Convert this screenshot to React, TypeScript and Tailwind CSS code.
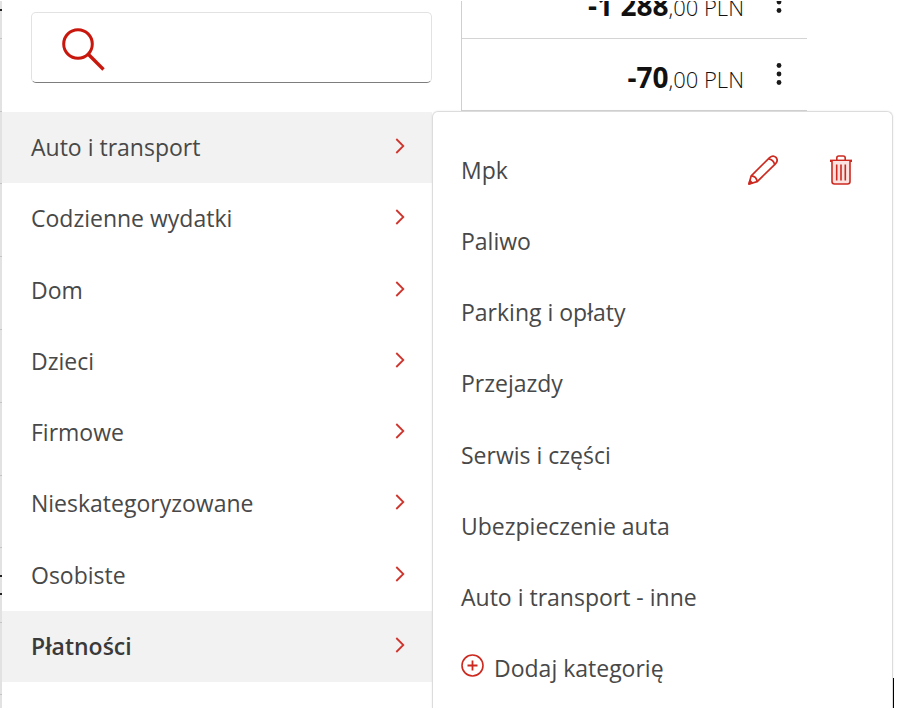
import { useState } from 'react';
import clsx from 'clsx';

interface Transaction {
  id: number;
  whole: string;
  cents: string;
}

const transactions: Transaction[] = [
  { id: 1, whole: '-1 288', cents: ',00 PLN' },
  { id: 2, whole: '-70', cents: ',00 PLN' },
];

const categories = [
  'Auto i transport',
  'Codzienne wydatki',
  'Dom',
  'Dzieci',
  'Firmowe',
  'Nieskategoryzowane',
  'Osobiste',
  'Płatności',
];

const subcategories = [
  { name: 'Mpk', editable: true },
  { name: 'Paliwo' },
  { name: 'Parking i opłaty' },
  { name: 'Przejazdy' },
  { name: 'Serwis i części' },
  { name: 'Ubezpieczenie auta' },
  { name: 'Auto i transport - inne' },
];

const currentCategory = 'Płatności';

function SearchIcon() {
  return (
    <svg className="h-11 w-11 shrink-0" viewBox="0 0 44 44" fill="none" stroke="#c8170d" aria-hidden="true">
      <circle cx="17" cy="17" r="14.3" strokeWidth="3" />
      <path d="M27.3 27.3 42.5 42.5" strokeWidth="3.4" />
    </svg>
  );
}

function ChevronIcon() {
  return (
    <svg className="h-4 w-[10px] shrink-0" viewBox="0 0 10 16" fill="none" stroke="#d0342c" strokeWidth="1.8" aria-hidden="true">
      <path d="M1.3 1 8.3 8 1.3 15" />
    </svg>
  );
}

function PencilIcon() {
  return (
    <svg
      className="h-[30px] w-[30px]"
      viewBox="0 0 30 30"
      fill="none"
      stroke="#cc2a20"
      strokeWidth="1.7"
      strokeLinejoin="round"
      aria-hidden="true"
    >
      <path d="M1 29 3.2 20.8 21.6 2.6Q25-.4 28 2.4 30.6 5.6 27.4 8.8L9.2 26.6Z" />
      <path d="M3.2 20.8Q8.4 21 9.2 26.6" />
      <path d="M20.6 3.8Q25.4 4.6 26.6 9.4" />
      <path d="M1 29 1.9 25.6 4.4 28Z" fill="#cc2a20" />
    </svg>
  );
}

function TrashIcon() {
  return (
    <svg className="h-[30px] w-[22px]" viewBox="0 0 22 30" fill="none" stroke="#cc2a20" strokeWidth="1.6" aria-hidden="true">
      <path d="M0 5.8H22" strokeWidth="2.4" />
      <path d="M6.8 5V3Q6.8 1 8.8 1H13.2Q15.2 1 15.2 3V5" />
      <path d="M2 6V26.5Q2 29 4.5 29H17.5Q20 29 20 26.5V6" fill="#fbe3e1" />
      <path d="M6.7 9.5V25.5M11 9.5V25.5M15.3 9.5V25.5" />
    </svg>
  );
}

function PlusIcon() {
  return (
    <svg className="h-[23px] w-[23px] shrink-0" viewBox="0 0 23 23" fill="none" stroke="#cc2a20" aria-hidden="true">
      <circle cx="11.5" cy="11.5" r="10.5" strokeWidth="1.6" />
      <path d="M11.5 6.5V16.5M6.5 11.5H16.5" strokeWidth="1.8" />
    </svg>
  );
}

function DotsIcon() {
  return (
    <svg className="h-[22px] w-[6px]" viewBox="0 0 6 22" fill="#1a1a1a" aria-hidden="true">
      <circle cx="3" cy="2.5" r="2.4" />
      <circle cx="3" cy="11" r="2.4" />
      <circle cx="3" cy="19.5" r="2.4" />
    </svg>
  );
}

function TransactionRow({ transaction }: { transaction: Transaction }) {
  return (
    <li className="flex h-[72px] shrink-0 items-center justify-end border-b border-[#d4d4d4] pr-[25px]">
      <span className="pt-[6px] text-[22px] leading-8 font-light text-[#111]">
        <b className="text-[28px] font-bold">{transaction.whole}</b>
        {transaction.cents}
      </span>
      <button type="button" aria-label="Więcej opcji" className="ml-8 pb-[2px]">
        <DotsIcon />
      </button>
    </li>
  );
}

export default function App() {
  const [open, setOpen] = useState('Auto i transport');
  const [query, setQuery] = useState('');

  return (
    <main className="flex bg-white pt-px font-['Open_Sans','Noto_Sans',sans-serif] text-[23px] leading-8 text-[#484848]">
      {/* rows of the page that show beside the picker */}
      <div className="flex w-[2px] shrink-0 flex-col bg-[#e2e2e2]">
        <i className="mt-2 h-[2px] bg-[#222]" />
        <i className="mt-[27px] h-px bg-[#c4c4c4]" />
        <i className="mt-18 h-px bg-[#c4c4c4]" />
        <i className="mt-[71px] h-px bg-[#c4c4c4]" />
        <i className="mt-18 h-px bg-[#c4c4c4]" />
        <i className="mt-18 h-px bg-[#c4c4c4]" />
        <i className="mt-18 h-px bg-[#c4c4c4]" />
        <i className="mt-18 h-px bg-[#c4c4c4]" />
        <i className="mt-[71px] h-px bg-[#c4c4c4]" />
        <i className="mt-[27px] h-[2px] bg-[#222]" />
        <i className="mt-4 h-[2px] bg-[#222]" />
        <i className="mt-[27px] h-px bg-[#c4c4c4]" />
        <i className="mt-[71px] h-px bg-[#c4c4c4]" />
      </div>

      <section className="w-[430px] shrink-0">
        <div className="pt-[11px] pb-[29px] pl-[29px]">
          <label className="flex h-[71px] items-start gap-4 rounded-[5px] border border-[#e2e2e2] border-b-[#7d7d7d] pt-[14px] pr-4 pl-[29px]">
            <SearchIcon />
            <input
              type="search"
              aria-label="Szukaj kategorii"
              value={query}
              onChange={(e) => setQuery(e.target.value)}
              className="h-11 min-w-0 flex-1 bg-transparent outline-none"
            />
          </label>
        </div>
        <ul className="grid min-h-[570px] auto-rows-fr">
          {categories.map((name) => (
            <li key={name} className="flex">
              <button
                type="button"
                onClick={() => setOpen(name)}
                className={clsx(
                  'flex flex-1 items-center justify-between pr-[27px] pb-px pl-[29px] text-left',
                  (name === open || name === currentCategory) && 'bg-[#f2f2f2]',
                  name === currentCategory && 'font-semibold text-[#3a3a3a]',
                )}
              >
                {name}
                <span className="pb-[2px]">
                  <ChevronIcon />
                </span>
              </button>
            </li>
          ))}
        </ul>
      </section>

      <div className="flex min-w-0 flex-1 flex-col">
        <ul className="mr-[98px] ml-[29px] flex h-[110px] flex-col justify-end overflow-hidden border-l border-[#cfcfcf]">
          {transactions.map((t) => (
            <TransactionRow key={t.id} transaction={t} />
          ))}
        </ul>
        <div className="mr-[11px] flex flex-1">
          <section className="min-w-0 flex-1 rounded-t-md border border-b-0 border-[#dcdcdc] pt-[22px] pb-1 shadow-[0_0_2px_rgba(0,0,0,0.1)]">
            <ul className="grid min-h-[570px] auto-rows-fr pl-7">
              {subcategories.map((sub) => (
                <li key={sub.name} className="flex items-center pr-10">
                  <button type="button" className="flex-1 text-left">
                    {sub.name}
                  </button>
                  {sub.editable && (
                    <>
                      <button type="button" aria-label={`Edytuj ${sub.name}`}>
                        <PencilIcon />
                      </button>
                      <button type="button" aria-label={`Usuń ${sub.name}`} className="ml-[52px]">
                        <TrashIcon />
                      </button>
                    </>
                  )}
                </li>
              ))}
              <li className="flex items-center">
                <button type="button" className="flex items-start gap-[10px]">
                  <span className="pt-[2px]">
                    <PlusIcon />
                  </span>
                  Dodaj kategorię
                </button>
              </li>
            </ul>
          </section>
          <span className="h-[30px] w-px self-end bg-black" />
        </div>
      </div>
    </main>
  );
}
